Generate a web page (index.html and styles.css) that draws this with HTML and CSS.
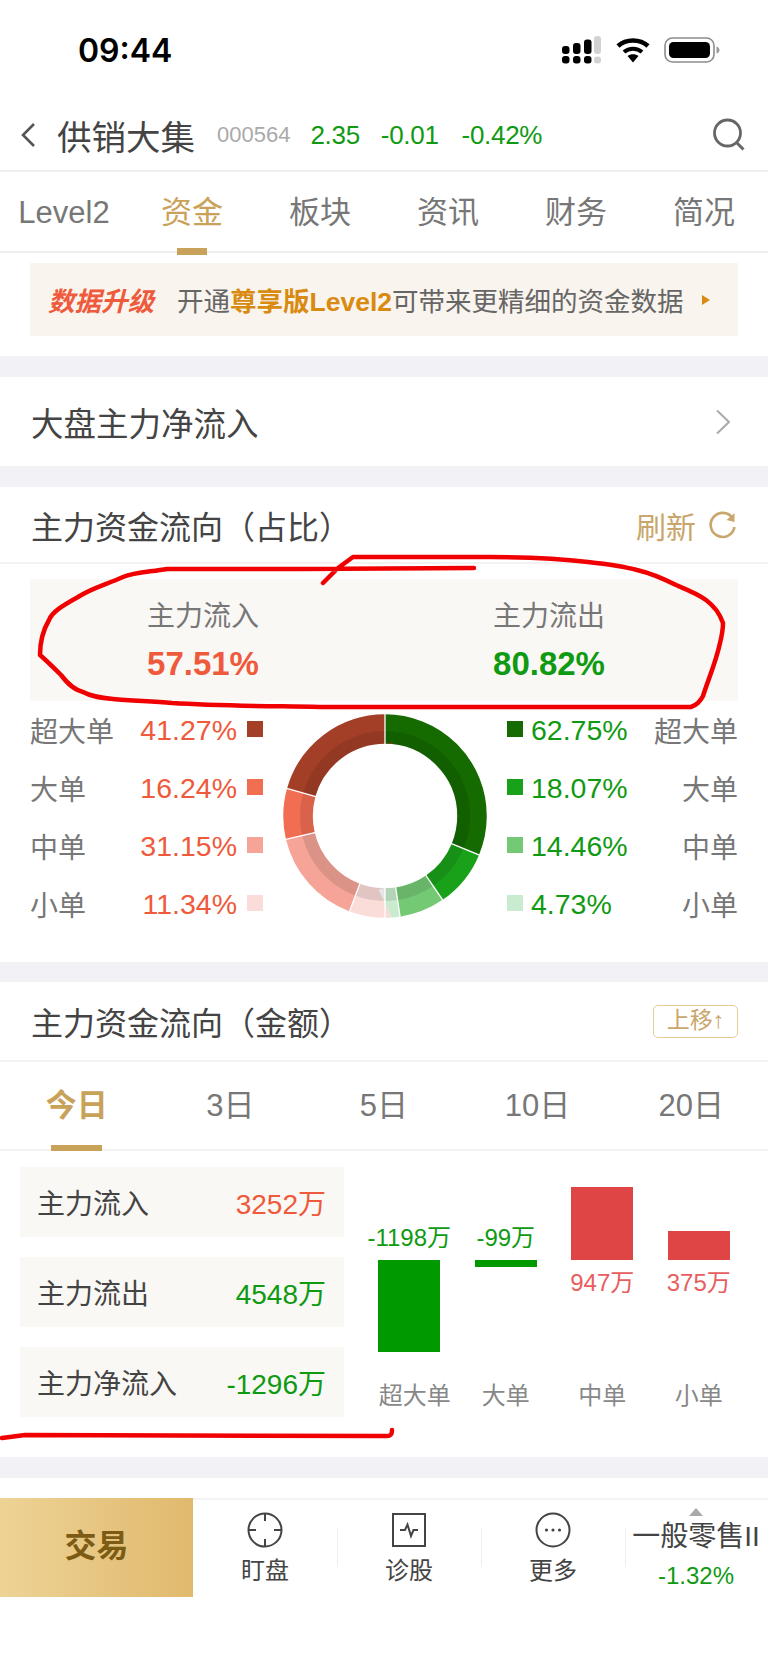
FILE: index.html
```html
<!DOCTYPE html>
<html lang="zh-CN">
<head>
    <meta charset="UTF-8">
    <meta name="viewport" content="width=device-width, initial-scale=1.0">
    <title>供销大集 - 资金</title>
    <link rel="stylesheet" href="styles.css">
</head>
<body>
    <div class="page">
        <div class="status-bar">
            <span class="time">09:44</span>
            <svg class="signal" width="40" height="28" viewBox="0 0 40 28">
                <g fill="#000">
                    <rect x="0" y="10" width="7.5" height="8" rx="3"/>
                    <rect x="0" y="20" width="7.5" height="7.5" rx="3"/>
                    <rect x="11" y="7" width="7.5" height="11" rx="3"/>
                    <rect x="11" y="20" width="7.5" height="7.5" rx="3"/>
                    <rect x="22" y="3.5" width="7.5" height="14.5" rx="3"/>
                    <rect x="22" y="20" width="7.5" height="7.5" rx="3"/>
                </g>
                <g fill="#d2d2d2">
                    <rect x="32" y="0" width="7" height="18" rx="3"/>
                    <rect x="32" y="20.5" width="7" height="7" rx="3"/>
                </g>
            </svg>
            <svg class="wifi" width="34" height="26" viewBox="0 0 34 26">
                <path d="M2 9 C10 1.500 24 1.500 32 9" fill="none" stroke="#000" stroke-width="4.500"/>
                <path d="M8 15 C13 10.500 21 10.500 26 15" fill="none" stroke="#000" stroke-width="4"/>
                <path d="M11.500 19 C14.500 16.500 19.500 16.500 22.500 19 L17 25.500 Z" fill="#000"/>
            </svg>
            <svg class="battery" width="56" height="26" viewBox="0 0 56 26">
                <rect x="1" y="1" width="49" height="24" rx="7.500" fill="#fff" stroke="#8c8c8c" stroke-width="1.600"/>
                <rect x="5" y="5" width="41" height="16" rx="4.500" fill="#000"/>
                <path d="M52.500 9.500 C54.500 10 55.500 11.500 55.500 13 C55.500 14.500 54.500 16 52.500 16.500 Z" fill="#9a9a9a"/>
            </svg>
        </div>

        <div class="title-bar">
            <svg class="back" width="16" height="26" viewBox="0 0 16 26">
                <path d="M14 2 L3 13 L14 24" fill="none" stroke="#555" stroke-width="2.600"/>
            </svg>
            <span class="stock-name">供销大集</span>
            <span class="stock-code">000564</span>
            <span class="stock-num price">2.35</span>
            <span class="stock-num change">-0.01</span>
            <span class="stock-num">-0.42%</span>
            <svg class="search" width="34" height="34" viewBox="0 0 34 34">
                <circle cx="15.500" cy="15" r="13" fill="none" stroke="#666" stroke-width="2.800"/>
                <path d="M24.500 24.500 L31.500 31.500" stroke="#666" stroke-width="3"/>
            </svg>
        </div>

        <div class="main-tabs">
            <a>Level2</a>
            <a class="active">资金</a>
            <a>板块</a>
            <a>资讯</a>
            <a>财务</a>
            <a>简况</a>
        </div>

        <div class="promo-wrap">
            <div class="promo">
                <span class="promo-tag">数据升级</span>
                <span class="promo-text">开通<b>尊享版Level2</b>可带来更精细的资金数据</span>
                <span class="promo-arrow"></span>
            </div>
        </div>

        <div class="market-row">
            <span>大盘主力净流入</span>
            <svg width="16" height="26" viewBox="0 0 16 26">
                <path d="M2 1.500 L14 13 L2 24.500" fill="none" stroke="#aaa" stroke-width="2"/>
            </svg>
        </div>

        <section class="ratio">
            <div class="section-head">
                <h2>主力资金流向（占比）</h2>
                <span class="refresh">刷新
                    <svg width="30" height="30" viewBox="0 0 30 30">
                        <path d="M24.500 8 A12 12 0 1 0 26.500 17" fill="none" stroke="#c9a66b" stroke-width="2.600"/>
                        <path d="M26.500 3 L26.500 12 L18.500 10 Z" fill="#c9a66b"/>
                    </svg>
                </span>
            </div>
            <div class="summary">
                <div class="summary-item">
                    <span class="summary-label">主力流入</span>
                    <span class="summary-value up">57.51%</span>
                </div>
                <div class="summary-item">
                    <span class="summary-label">主力流出</span>
                    <span class="summary-value down">80.82%</span>
                </div>
            </div>
            <div class="breakdown">
                <div class="legend">
                    <div class="legend-row"><span class="legend-name">超大单</span><span class="legend-num up">41.27%</span><i class="swatch r1"></i></div>
                    <div class="legend-row"><span class="legend-name">大单</span><span class="legend-num up">16.24%</span><i class="swatch r2"></i></div>
                    <div class="legend-row"><span class="legend-name">中单</span><span class="legend-num up">31.15%</span><i class="swatch r3"></i></div>
                    <div class="legend-row"><span class="legend-name">小单</span><span class="legend-num up">11.34%</span><i class="swatch r4"></i></div>
                </div>
                <svg class="donut" width="204" height="204" viewBox="-102 -102 204 204">
                    <g class="ring" transform="rotate(-90)">
                        <circle class="seg-g1" r="87" pathLength="360" stroke-dasharray="112.500 247.500"/>
                        <circle class="seg-g2" r="87" pathLength="360" stroke-dasharray="33 327" stroke-dashoffset="-112.500"/>
                        <circle class="seg-g3" r="87" pathLength="360" stroke-dasharray="26 334" stroke-dashoffset="-145.500"/>
                        <circle class="seg-g4" r="87" pathLength="360" stroke-dasharray="8.500 351.500" stroke-dashoffset="-171.500"/>
                        <circle class="seg-r4" r="87" pathLength="360" stroke-dasharray="20.400 339.600" stroke-dashoffset="-180"/>
                        <circle class="seg-r3" r="87" pathLength="360" stroke-dasharray="56.300 303.700" stroke-dashoffset="-200.400"/>
                        <circle class="seg-r2" r="87" pathLength="360" stroke-dasharray="29 331" stroke-dashoffset="-256.700"/>
                        <circle class="seg-r1" r="87" pathLength="360" stroke-dasharray="74.300 285.700" stroke-dashoffset="-285.700"/>
                    </g>
                    <circle class="ring-shade" r="78.500"/>
                    <g class="cuts">
                        <line y1="-70" y2="-103"/>
                        <line y1="-70" y2="-103" transform="rotate(112.500)"/>
                        <line y1="-70" y2="-103" transform="rotate(145.500)"/>
                        <line y1="-70" y2="-103" transform="rotate(171.500)"/>
                        <line y1="-70" y2="-103" transform="rotate(180)"/>
                        <line y1="-70" y2="-103" transform="rotate(200.400)"/>
                        <line y1="-70" y2="-103" transform="rotate(256.700)"/>
                        <line y1="-70" y2="-103" transform="rotate(285.700)"/>
                    </g>
                </svg>
                <div class="legend">
                    <div class="legend-row"><i class="swatch g1"></i><span class="legend-num down">62.75%</span><span class="legend-name">超大单</span></div>
                    <div class="legend-row"><i class="swatch g2"></i><span class="legend-num down">18.07%</span><span class="legend-name">大单</span></div>
                    <div class="legend-row"><i class="swatch g3"></i><span class="legend-num down">14.46%</span><span class="legend-name">中单</span></div>
                    <div class="legend-row"><i class="swatch g4"></i><span class="legend-num down">4.73%</span><span class="legend-name">小单</span></div>
                </div>
            </div>
        </section>

        <section class="amount">
            <div class="section-head">
                <h2>主力资金流向（金额）</h2>
                <span class="move-up">上移↑</span>
            </div>
            <div class="day-tabs">
                <a class="active">今日</a>
                <a>3日</a>
                <a>5日</a>
                <a>10日</a>
                <a>20日</a>
            </div>
            <div class="amount-body">
                <div class="totals">
                    <div class="total-row"><span>主力流入</span><span class="up">3252万</span></div>
                    <div class="total-row"><span>主力流出</span><span class="down">4548万</span></div>
                    <div class="total-row"><span>主力净流入</span><span class="down">-1296万</span></div>
                </div>
                <div class="bars">
                    <div class="bar-col">
                        <div class="bar-above"><span class="bar-num down">-1198万</span></div>
                        <div class="bar-below"><div class="bar bar-down" style="height:92px"></div></div>
                        <span class="bar-name wide">超大单</span>
                    </div>
                    <div class="bar-col">
                        <div class="bar-above"><span class="bar-num down">-99万</span></div>
                        <div class="bar-below"><div class="bar bar-down" style="height:7px"></div></div>
                        <span class="bar-name">大单</span>
                    </div>
                    <div class="bar-col">
                        <div class="bar-above"><div class="bar bar-up" style="height:73px"></div></div>
                        <div class="bar-below"><span class="bar-num soft-red">947万</span></div>
                        <span class="bar-name">中单</span>
                    </div>
                    <div class="bar-col">
                        <div class="bar-above"><div class="bar bar-up" style="height:29px"></div></div>
                        <div class="bar-below"><span class="bar-num soft-red">375万</span></div>
                        <span class="bar-name">小单</span>
                    </div>
                </div>
            </div>
        </section>

        <div class="bottom-bar">
            <div class="trade">交易</div>
            <div class="nav-item">
                <svg width="36" height="36" viewBox="0 0 36 36">
                    <circle cx="18" cy="18" r="16.500" fill="none" stroke="#444" stroke-width="2"/>
                    <path d="M18 1 V9 M18 27 V35 M1 18 H9 M27 18 H35" stroke="#444" stroke-width="2"/>
                </svg>
                <span>盯盘</span>
            </div>
            <i class="nav-sep"></i>
            <div class="nav-item">
                <svg width="36" height="36" viewBox="0 0 36 36">
                    <rect x="2" y="2" width="32" height="32" fill="none" stroke="#444" stroke-width="2"/>
                    <path d="M9 18 H14 L16.500 12.500 L20 24 L22.500 18 H27" fill="none" stroke="#444" stroke-width="2"/>
                </svg>
                <span>诊股</span>
            </div>
            <i class="nav-sep"></i>
            <div class="nav-item">
                <svg width="36" height="36" viewBox="0 0 36 36">
                    <circle cx="18" cy="18" r="16.500" fill="none" stroke="#444" stroke-width="2"/>
                    <circle cx="11.500" cy="18" r="1.600" fill="#444"/>
                    <circle cx="18" cy="18" r="1.600" fill="#444"/>
                    <circle cx="24.500" cy="18" r="1.600" fill="#444"/>
                </svg>
                <span>更多</span>
            </div>
            <i class="nav-sep"></i>
            <div class="quote">
                <i class="quote-caret"></i>
                <span class="quote-name">一般零售II</span>
                <span class="quote-num">-1.32%</span>
            </div>
        </div>

        <!-- hand drawn red marks on top of the screenshot -->
        <svg class="marks" width="768" height="1664" viewBox="0 0 768 1664">
            <path d="M474 568 L300 569 L167 569 C150 572 135 572 123 577 C105 585 92 588 78 597 C62 606 52 612 49 620 C42 632 40 642 40 655 C48 662 54 668 61 675 C68 684 74 690 83 692 C92 697 102 698 113 699 C130 701 150 701 172 703 C220 706 270 706 319 707 L691 707 C697 705 700 702 703 696 C708 680 716 662 720 643 C722 635 723 630 723 623 C720 614 714 606 706 600 C698 594 688 590 676 585 C664 579 650 573 637 570 C622 566 606 564 588 562 C556 558 524 557 490 557 L353 557 L338 568 L323 583"/>
            <path d="M2 1438 L25 1435 L387 1436 C391 1436 392 1434 392 1430"/>
        </svg>
    </div>
</body>
</html>
```

FILE: styles.css
```css
* {
    box-sizing: border-box;
}
body {
    margin: 0;
    background-color: #fff;
    font-family: "Liberation Sans", "Noto Sans CJK SC", sans-serif;
    color: #444;
}
a {
    display: block;
}
h2 {
    margin: 0;
    font-size: 32px;
    font-weight: 400;
    color: #444;
}
.page {
    position: relative;
    width: 768px;
    height: 1664px;
    overflow: hidden;
}
.up {
    color: #ee5a3b;
}
.down {
    color: #0f9a12;
}

/* status bar */
.status-bar {
    display: flex;
    align-items: center;
    height: 100px;
    padding-left: 78px;
}
.time {
    font-family: Inter, sans-serif;
    font-size: 32px;
    font-weight: 600;
    color: #000;
    margin-right: 390px;
}
.signal {
    margin-right: 14px;
}
.wifi {
    margin-right: 14px;
}

/* title bar */
.title-bar {
    display: flex;
    align-items: center;
    height: 72px;
    padding-left: 20px;
    border-bottom: 2px solid #eee;
}
.back {
    margin-right: 21px;
}
.stock-name {
    font-size: 34.500px;
    color: #444;
    margin-right: 22px;
}
.stock-code {
    font-size: 22px;
    color: #aaa;
    margin-right: 20px;
}
.stock-num {
    font-size: 26px;
    color: #0f9a12;
    letter-spacing: -0.300px;
}
.price {
    margin-right: 21px;
}
.change {
    margin-right: 23px;
}
.search {
    margin-left: auto;
    margin-right: 22px;
}

/* main tabs */
.main-tabs {
    display: grid;
    grid-template-columns: repeat(6, 1fr);
    height: 81px;
    border-bottom: 2px solid #eee;
}
.main-tabs a {
    position: relative;
    text-align: center;
    line-height: 81px;
    font-size: 31px;
    color: #777;
}
.main-tabs a.active {
    color: #c9a25a;
}
.main-tabs a.active::after {
    content: "";
    position: absolute;
    left: 49px;
    bottom: -2px;
    width: 30px;
    height: 7px;
    background-color: #c9a25a;
}

/* promo banner */
.promo-wrap {
    height: 103px;
    padding: 10px 30px 0;
}
.promo {
    display: flex;
    align-items: center;
    height: 73px;
    padding-left: 18px;
    background-color: #f9f4ee;
}
.promo-tag {
    font-size: 26.500px;
    font-weight: 700;
    font-style: italic;
    color: #ee5a3b;
    margin-right: 23px;
}
.promo-text {
    font-size: 26.500px;
    color: #666;
}
.promo-text b {
    color: #d98a10;
}
.promo-arrow {
    width: 0;
    height: 0;
    margin-left: 18px;
    border-left: 8px solid #d98a10;
    border-top: 5px solid transparent;
    border-bottom: 5px solid transparent;
}

/* market row */
.market-row {
    display: flex;
    align-items: center;
    justify-content: space-between;
    height: 131px;
    padding: 21px 37px 21px 31px;
    font-size: 32.500px;
    background-color: #fff;
    border-top: 21px solid #f1f1f6;
    border-bottom: 21px solid #f1f1f6;
}
.market-row {
    padding-top: 0;
    padding-bottom: 0;
}

/* section head */
.section-head {
    display: flex;
    align-items: center;
    justify-content: space-between;
    height: 77px;
    padding: 0 30px 0 31px;
    border-bottom: 2px solid #f2f2f2;
}
.refresh {
    display: flex;
    align-items: center;
    gap: 12px;
    font-size: 30px;
    color: #c9a66b;
}
.move-up {
    width: 85px;
    height: 33px;
    border: 1.500px solid #e8cb98;
    border-radius: 5px;
    font-size: 23px;
    line-height: 29px;
    text-align: center;
    color: #c9a66b;
}

/* ratio section */
.ratio {
    height: 475px;
}
.summary {
    display: flex;
    height: 122px;
    margin: 15px 30px 0;
    background-color: #faf8f5;
}
.summary-item {
    display: flex;
    flex-direction: column;
    align-items: center;
    width: 346px;
    padding-top: 18px;
}
.summary-item:last-child {
    width: 346px;
}
.summary-label {
    font-size: 28px;
    line-height: 40px;
    color: #777;
}
.summary-value {
    font-size: 33px;
    font-weight: 700;
    line-height: 50px;
    margin-top: 2px;
}
.breakdown {
    display: grid;
    grid-template-columns: 233px 204px 231px;
    column-gap: 20px;
    margin: 0 30px;
}
.legend-row {
    display: flex;
    align-items: center;
    height: 58px;
}
.legend-name {
    font-size: 28px;
    color: #777;
}
.legend-num {
    flex: 1;
    font-size: 28.500px;
    text-align: right;
}
.swatch {
    display: block;
    width: 16px;
    height: 16px;
    margin-left: 10px;
    margin-top: -2px;
}
.legend-row .swatch:first-child {
    margin-left: 0;
}
.legend-row .swatch:first-child + .legend-num {
    flex: 1;
    margin-left: 8px;
    text-align: left;
}
.r1 { background-color: #a43f27; }
.r2 { background-color: #f26e53; }
.r3 { background-color: #f5a497; }
.r4 { background-color: #fadcd8; }
.g1 { background-color: #156a00; }
.g2 { background-color: #1aa11a; }
.g3 { background-color: #74c974; }
.g4 { background-color: #c9ecd0; }

/* donut */
.donut {
    margin-top: 13px;
}
.ring circle {
    fill: none;
    stroke-width: 29.500;
}
.seg-g1 { stroke: #156a00; }
.seg-g2 { stroke: #1aa11a; }
.seg-g3 { stroke: #74c974; }
.seg-g4 { stroke: #c9ecd0; }
.seg-r1 { stroke: #a43f27; }
.seg-r2 { stroke: #f26e53; }
.seg-r3 { stroke: #f5a497; }
.seg-r4 { stroke: #fadcd8; }
.ring-shade {
    fill: none;
    stroke: #000;
    stroke-opacity: 0.1;
    stroke-width: 13;
}
.cuts line {
    stroke: #fff;
    stroke-width: 1.300;
}

/* amount section */
.amount {
    border-top: 20px solid #f1f1f6;
    border-bottom: 21px solid #f1f1f6;
}
.amount .section-head {
    height: 80px;
}
.day-tabs {
    display: grid;
    grid-template-columns: repeat(5, 1fr);
    height: 89px;
    border-bottom: 2px solid #f2f2f2;
}
.day-tabs a {
    position: relative;
    text-align: center;
    line-height: 87px;
    font-size: 31px;
    color: #777;
}
.day-tabs a.active {
    font-weight: 700;
    color: #c9a25a;
}
.day-tabs a.active::after {
    content: "";
    position: absolute;
    left: 51px;
    bottom: -2px;
    width: 51px;
    height: 6px;
    background-color: #c9a25a;
}
.amount-body {
    display: flex;
    height: 306px;
    padding: 16px 0 0 20px;
}
.totals {
    display: flex;
    flex-direction: column;
    gap: 20px;
    width: 324px;
}
.total-row {
    display: flex;
    align-items: center;
    justify-content: space-between;
    height: 70px;
    padding: 0 18px 0 17px;
    background-color: #faf8f5;
    font-size: 28px;
}
.bars {
    display: grid;
    grid-template-columns: repeat(4, 96.500px);
    margin-left: 17px;
    height: 245px;
}
.bar-col {
    display: flex;
    flex-direction: column;
    align-items: center;
}
.bar-above {
    display: flex;
    flex-direction: column;
    justify-content: flex-end;
    height: 93px;
}
.bar-below {
    height: 120px;
}
.bar-above .bar-num {
    margin-bottom: 7px;
}
.bar-below .bar-num {
    display: block;
    margin-top: 8px;
}
.bar {
    width: 62px;
}
.bar-down {
    background-color: #009a00;
}
.bar-up {
    background-color: #e04545;
}
.bar-num {
    font-size: 24px;
    line-height: 30px;
    white-space: nowrap;
}
.soft-red {
    color: #e85d5d;
}
.bar-name {
    font-size: 24px;
    line-height: 32px;
    color: #888;
}
.bar-name.wide {
    margin-left: 11px;
}

/* bottom bar */
.bottom-bar {
    display: flex;
    height: 99px;
    margin-top: 20px;
    border-top: 2px solid #f4f4f4;
}
.trade {
    width: 193px;
    height: 99px;
    margin-top: -2px;
    background: linear-gradient(to right, #eed396, #e0b96d);
    text-align: center;
    line-height: 96px;
    font-size: 32px;
    font-weight: 700;
    color: #7c5c14;
}
.nav-item {
    display: flex;
    flex-direction: column;
    align-items: center;
    width: 144px;
    padding-top: 12px;
}
.nav-item span {
    margin-top: 7px;
    font-size: 24px;
    line-height: 32px;
    color: #444;
}
.nav-sep {
    width: 1px;
    height: 39px;
    margin: 28px -1px 0 0;
    background-color: #eee;
}
.quote {
    display: flex;
    flex-direction: column;
    align-items: center;
    width: 142px;
    padding-top: 8px;
}
.quote-caret {
    width: 0;
    height: 0;
    border-left: 7px solid transparent;
    border-right: 7px solid transparent;
    border-bottom: 8px solid #aaa;
}
.quote-name {
    font-size: 28px;
    line-height: 40px;
    margin-top: 1px;
    white-space: nowrap;
    color: #444;
}
.quote-num {
    font-size: 24px;
    line-height: 30px;
    margin-top: 4px;
    color: #0f9a12;
}

/* red marks */
.marks {
    position: absolute;
    left: 0;
    top: 0;
    pointer-events: none;
}
.marks path {
    fill: none;
    stroke: #f00000;
    stroke-width: 4.500;
    stroke-linecap: round;
    stroke-linejoin: round;
}
```
